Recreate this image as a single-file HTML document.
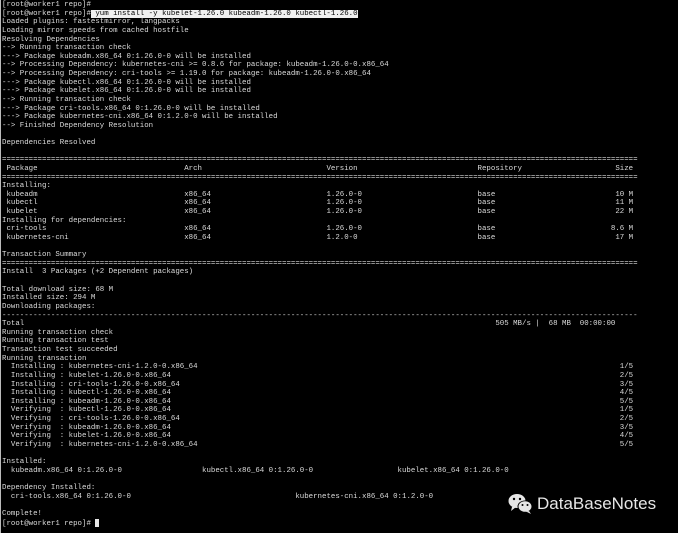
<!DOCTYPE html>
<html><head><meta charset="utf-8"><style>
html,body{margin:0;padding:0;background:#000;width:678px;height:533px;overflow:hidden}
#t{position:absolute;left:2px;top:1px;font-family:"Liberation Mono",monospace;font-size:7.42px;color:#dcdcdc;}
.l{position:relative;height:8.63px;line-height:8.63px;white-space:pre}
.l span{position:absolute;top:0}
.r{left:0;width:142ch;text-align:right}
.hl{background:#f0f0f0;color:#000}
.cur{display:inline-block;width:4px;height:8px;background:#e8e8e8;vertical-align:middle}
#b{position:absolute;left:0;top:0;width:1px;height:533px;background:#bbb}
#wm{position:absolute;left:508px;top:493px;display:flex;align-items:center;color:#e6e6e6;font-family:"Liberation Sans","DejaVu Sans",sans-serif;font-size:17px}
</style></head><body>
<div id="b"></div>
<div id="t">
<div class="l">[root@worker1 repo]#</div>
<div class="l">[root@worker1 repo]#<span class="hl" style="left:20ch"> yum install -y kubelet-1.26.0 kubeadm-1.26.0 kubectl-1.26.0</span></div>
<div class="l">Loaded plugins: fastestmirror, langpacks</div>
<div class="l">Loading mirror speeds from cached hostfile</div>
<div class="l">Resolving Dependencies</div>
<div class="l">--&gt; Running transaction check</div>
<div class="l">---&gt; Package kubeadm.x86_64 0:1.26.0-0 will be installed</div>
<div class="l">--&gt; Processing Dependency: kubernetes-cni &gt;= 0.8.6 for package: kubeadm-1.26.0-0.x86_64</div>
<div class="l">--&gt; Processing Dependency: cri-tools &gt;= 1.19.0 for package: kubeadm-1.26.0-0.x86_64</div>
<div class="l">---&gt; Package kubectl.x86_64 0:1.26.0-0 will be installed</div>
<div class="l">---&gt; Package kubelet.x86_64 0:1.26.0-0 will be installed</div>
<div class="l">--&gt; Running transaction check</div>
<div class="l">---&gt; Package cri-tools.x86_64 0:1.26.0-0 will be installed</div>
<div class="l">---&gt; Package kubernetes-cni.x86_64 0:1.2.0-0 will be installed</div>
<div class="l">--&gt; Finished Dependency Resolution</div>
<div class="l"></div>
<div class="l">Dependencies Resolved</div>
<div class="l"></div>
<div class="l">===============================================================================================================================================</div>
<div class="l"> Package<span style="left:41ch">Arch</span><span style="left:73ch">Version</span><span style="left:107ch">Repository</span><span class="r">Size</span></div>
<div class="l">===============================================================================================================================================</div>
<div class="l">Installing:</div>
<div class="l"> kubeadm<span style="left:41ch">x86_64</span><span style="left:73ch">1.26.0-0</span><span style="left:107ch">base</span><span class="r">10 M</span></div>
<div class="l"> kubectl<span style="left:41ch">x86_64</span><span style="left:73ch">1.26.0-0</span><span style="left:107ch">base</span><span class="r">11 M</span></div>
<div class="l"> kubelet<span style="left:41ch">x86_64</span><span style="left:73ch">1.26.0-0</span><span style="left:107ch">base</span><span class="r">22 M</span></div>
<div class="l">Installing for dependencies:</div>
<div class="l"> cri-tools<span style="left:41ch">x86_64</span><span style="left:73ch">1.26.0-0</span><span style="left:107ch">base</span><span class="r">8.6 M</span></div>
<div class="l"> kubernetes-cni<span style="left:41ch">x86_64</span><span style="left:73ch">1.2.0-0</span><span style="left:107ch">base</span><span class="r">17 M</span></div>
<div class="l"></div>
<div class="l">Transaction Summary</div>
<div class="l">===============================================================================================================================================</div>
<div class="l">Install  3 Packages (+2 Dependent packages)</div>
<div class="l"></div>
<div class="l">Total download size: 68 M</div>
<div class="l">Installed size: 294 M</div>
<div class="l">Downloading packages:</div>
<div class="l">-----------------------------------------------------------------------------------------------------------------------------------------------</div>
<div class="l">Total<span style="left:111ch">505 MB/s |  68 MB  00:00:00</span></div>
<div class="l">Running transaction check</div>
<div class="l">Running transaction test</div>
<div class="l">Transaction test succeeded</div>
<div class="l">Running transaction</div>
<div class="l">  Installing : kubernetes-cni-1.2.0-0.x86_64<span class="r">1/5</span></div>
<div class="l">  Installing : kubelet-1.26.0-0.x86_64<span class="r">2/5</span></div>
<div class="l">  Installing : cri-tools-1.26.0-0.x86_64<span class="r">3/5</span></div>
<div class="l">  Installing : kubectl-1.26.0-0.x86_64<span class="r">4/5</span></div>
<div class="l">  Installing : kubeadm-1.26.0-0.x86_64<span class="r">5/5</span></div>
<div class="l">  Verifying  : kubectl-1.26.0-0.x86_64<span class="r">1/5</span></div>
<div class="l">  Verifying  : cri-tools-1.26.0-0.x86_64<span class="r">2/5</span></div>
<div class="l">  Verifying  : kubeadm-1.26.0-0.x86_64<span class="r">3/5</span></div>
<div class="l">  Verifying  : kubelet-1.26.0-0.x86_64<span class="r">4/5</span></div>
<div class="l">  Verifying  : kubernetes-cni-1.2.0-0.x86_64<span class="r">5/5</span></div>
<div class="l"></div>
<div class="l">Installed:</div>
<div class="l">  kubeadm.x86_64 0:1.26.0-0<span style="left:45ch">kubectl.x86_64 0:1.26.0-0</span><span style="left:89ch">kubelet.x86_64 0:1.26.0-0</span></div>
<div class="l"></div>
<div class="l">Dependency Installed:</div>
<div class="l">  cri-tools.x86_64 0:1.26.0-0<span style="left:66ch">kubernetes-cni.x86_64 0:1.2.0-0</span></div>
<div class="l"></div>
<div class="l">Complete!</div>
<div class="l">[root@worker1 repo]# <span class="cur" style="position:relative"></span></div>
</div>
<div id="wm">
<svg width="26" height="22" viewBox="0 0 26 22"><ellipse cx="9" cy="8" rx="8.5" ry="7" fill="#e6e6e6"/><path d="M4 14 L3 18 L8 14Z" fill="#e6e6e6"/><circle cx="6" cy="6" r="1.2" fill="#000"/><circle cx="12" cy="6" r="1.2" fill="#000"/><ellipse cx="17" cy="13.5" rx="7.5" ry="6" fill="#000"/><ellipse cx="17" cy="13.5" rx="6.5" ry="5.3" fill="#e6e6e6"/><path d="M21 18 L23 21 L18 18.5Z" fill="#e6e6e6"/><circle cx="14.5" cy="12" r="1" fill="#000"/><circle cx="19.5" cy="12" r="1" fill="#000"/></svg>
<span style="margin-left:3px">DataBaseNotes</span>
</div>
</body></html>
